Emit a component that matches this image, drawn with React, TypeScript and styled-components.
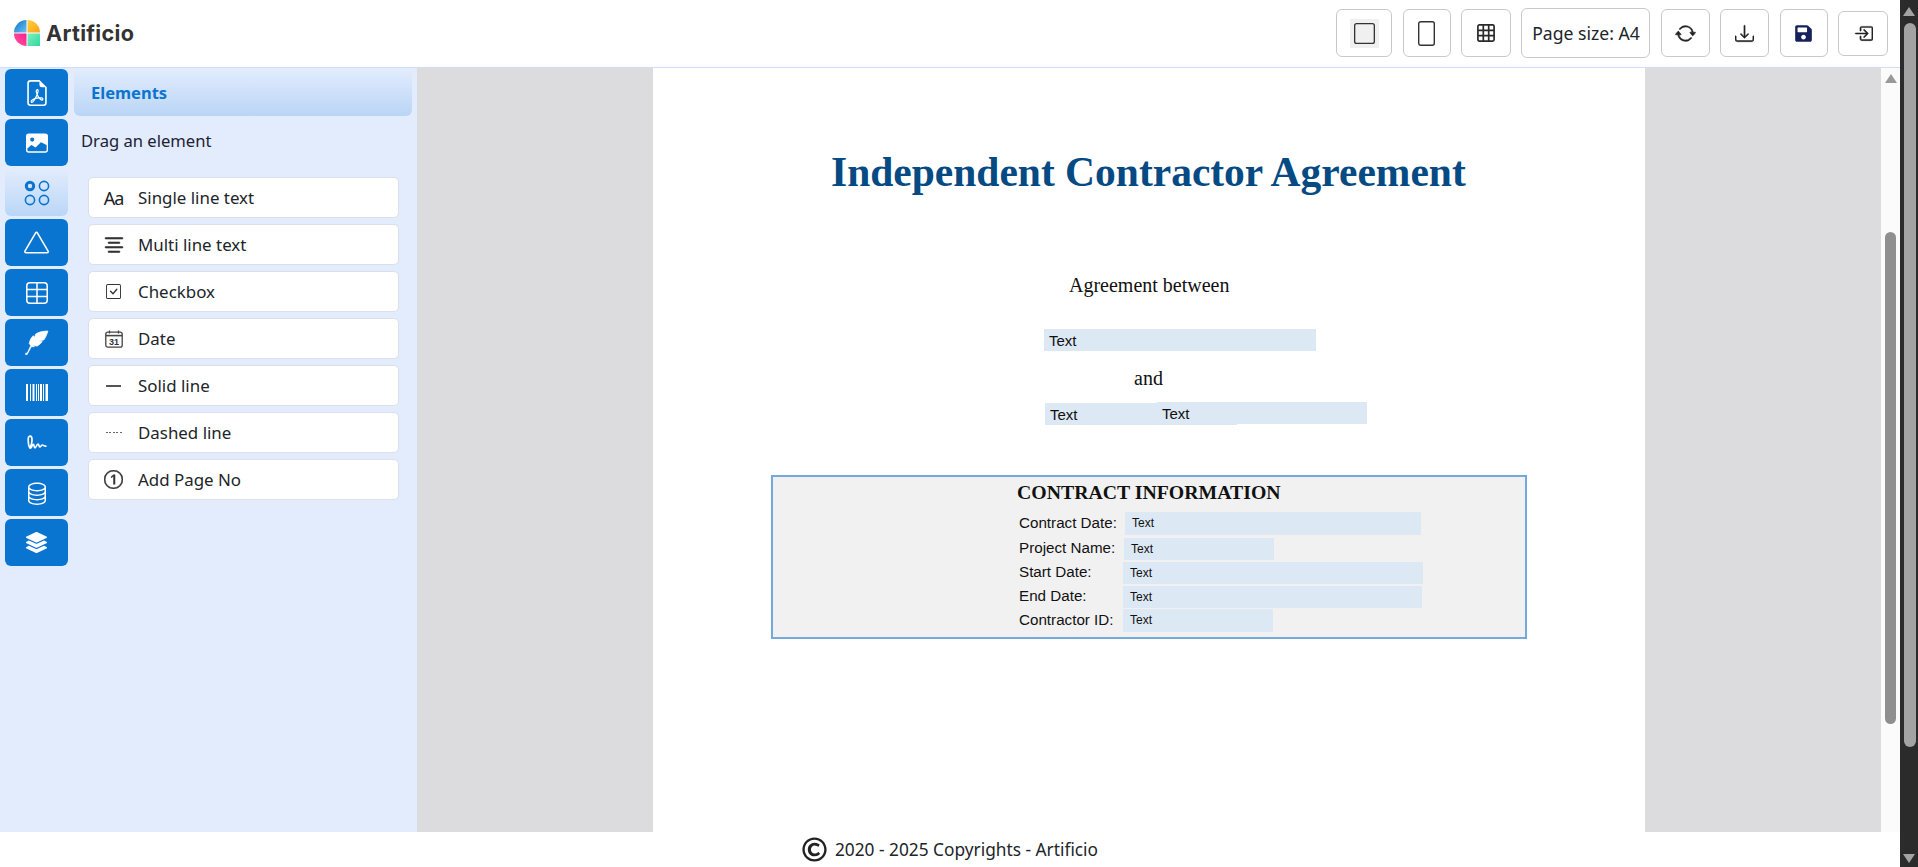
import React from "react";
import styled, { createGlobalStyle } from "styled-components";
import {
  BsArrowRepeat,
  BsBoxArrowInRight,
  BsCheckSquare,
  BsDatabase,
  BsDownload,
  BsFileEarmarkPdf,
  BsFillImageFill,
  BsSquare,
  BsTextCenter,
  BsTriangle,
  Bs1Circle,
} from "react-icons/bs";
import { FaLayerGroup, FaRegCopyright, FaSave } from "react-icons/fa";

const GlobalStyle = createGlobalStyle`
  html, body {
    margin: 0;
    padding: 0;
    height: 100%;
    overflow: hidden;
    background: #fff;
    font-family: "Noto Sans", "Open Sans", sans-serif;
  }
`;

const Shell = styled.div`
  display: flex;
  width: 100%;
  height: 867px;
`;

const Main = styled.div`
  flex: 1;
  min-width: 0;
  display: flex;
  flex-direction: column;
`;

const Header = styled.header`
  flex: none;
  display: flex;
  align-items: center;
  justify-content: space-between;
  padding: 0 12px 0 14px;
  box-sizing: border-box;
  border-bottom: 1px solid #cfdef8;
  height: 68px;
`;

const Brand = styled.div`
  display: flex;
  align-items: center;
  gap: 6px;
  font-family: Inter, sans-serif;
  font-weight: 700;
  font-size: 21.6px;
  letter-spacing: 0.3px;
  color: #333;
  margin-top: -1px;
`;

const Toolbar = styled.div`
  display: flex;
  align-items: center;
  gap: 10.4px;
  margin-top: -1px;
`;

const ToolButton = styled.button<{ $w: number; $h?: number }>`
  width: ${(p) => p.$w}px;
  height: ${(p) => p.$h ?? 48}px;
  box-sizing: border-box;
  padding: 0;
  background: #fff;
  border: 1px solid #c9c9c9;
  border-radius: 6px;
  display: flex;
  align-items: center;
  justify-content: center;
  font-family: "Noto Sans", sans-serif;
  font-size: 17.6px;
  color: #212529;
`;

const IconHighlight = styled.span`
  width: 29px;
  height: 29px;
  background: #f0f0f0;
  display: flex;
  align-items: center;
  justify-content: center;
`;

const Body = styled.div`
  flex: 1;
  min-height: 0;
  display: flex;
`;

const Sidebar = styled.aside`
  width: 417px;
  flex: none;
  display: flex;
  background: #e2ecfd;
`;

const Rail = styled.nav`
  width: 63px;
  margin-left: 5px;
  padding-top: 1px;
  display: flex;
  flex-direction: column;
  gap: 3px;
`;

const RailButton = styled.div<{ $active?: boolean }>`
  height: 47px;
  border-radius: 6px;
  display: flex;
  align-items: center;
  justify-content: center;
  color: ${(p) => (p.$active ? "#0a75d0" : "#fff")};
  background: ${(p) => (p.$active ? "linear-gradient(#e2ecfd, #bad6f6)" : "#0a75d0")};
`;

const Panel = styled.div`
  width: 338px;
  margin-left: 6px;
  padding-top: 1px;
`;

const PanelTitle = styled.div`
  height: 47px;
  border-radius: 0 0 6px 6px;
  background: linear-gradient(#e2ecfd, #b9d5f5);
  padding-left: 17px;
  display: flex;
  align-items: center;
  font-size: 16.5px;
  font-weight: 700;
  color: #0a75d0;
`;

const Hint = styled.div`
  margin: 13px 0 0 7px;
  height: 24px;
  line-height: 24px;
  font-size: 16.6px;
  color: #212135;
`;

const ElementList = styled.div`
  margin: 24px 13px 0 14px;
  display: flex;
  flex-direction: column;
  gap: 6px;
`;

const ElementCard = styled.div`
  height: 41px;
  box-sizing: border-box;
  background: #fff;
  border: 1px solid #dcdfe6;
  border-radius: 5px;
  display: flex;
  align-items: center;
  font-size: 16.9px;
  color: #212529;
`;

const ElementIcon = styled.span`
  width: 49px;
  flex: none;
  display: flex;
  align-items: center;
  justify-content: center;
  color: #333;
  font-size: 18px;
`;

const LetterIcon = styled.span`
  font-family: "Noto Sans", sans-serif;
  font-size: 18px;
  letter-spacing: -1px;
  color: #222;
`;

const SolidLine = styled.span`
  width: 15px;
  height: 2px;
  background: #555;
`;

const DottedLine = styled.span`
  width: 16px;
  height: 1.5px;
  background: repeating-linear-gradient(90deg, #666 0 2px, transparent 2px 3.5px);
`;

const Canvas = styled.div`
  flex: 1;
  min-width: 0;
  background: #dcdcde;
  display: flex;
  justify-content: center;
`;

const Page = styled.div`
  width: 992px;
  height: 100%;
  background: #fff;
  position: relative;
  overflow: hidden;
`;

const Title = styled.h1`
  position: absolute;
  left: 178px;
  top: 79px;
  margin: 0;
  white-space: nowrap;
  font-family: "Liberation Serif", serif;
  font-size: 41.5px;
  line-height: 50px;
  font-weight: 700;
  color: #064a83;
`;

const SerifLine = styled.div<{ $x: number; $y: number }>`
  position: absolute;
  left: ${(p) => p.$x}px;
  top: ${(p) => p.$y}px;
  font-family: "Liberation Serif", serif;
  font-size: 20px;
  line-height: 24px;
  white-space: nowrap;
  color: #111;
`;

const Field = styled.div<{ $x: number; $y: number; $w: number; $h?: number; $small?: boolean }>`
  position: absolute;
  left: ${(p) => p.$x}px;
  top: ${(p) => p.$y}px;
  width: ${(p) => p.$w}px;
  height: ${(p) => p.$h ?? 22}px;
  box-sizing: border-box;
  padding-left: ${(p) => (p.$small ? 7 : 5)}px;
  background: #dde8f5;
  font-family: "Liberation Sans", sans-serif;
  font-size: ${(p) => (p.$small ? 12 : 15)}px;
  line-height: ${(p) => (p.$small ? p.$h ?? 22 : 24)}px;
  color: #111;
`;

const InfoTable = styled.div`
  position: absolute;
  left: 118px;
  top: 407px;
  width: 756px;
  height: 164px;
  box-sizing: border-box;
  background: #f1f1f1;
  border: 2px solid #74a9dc;
`;

const InfoHeading = styled.div`
  position: absolute;
  left: 244px;
  top: 2px;
  font-family: "Liberation Serif", serif;
  font-weight: 700;
  font-size: 19.8px;
  line-height: 26px;
  white-space: nowrap;
  color: #111;
`;

const InfoLabel = styled.div<{ $y: number }>`
  position: absolute;
  left: 246px;
  top: ${(p) => p.$y}px;
  font-family: "Liberation Sans", sans-serif;
  font-size: 15.2px;
  line-height: 18px;
  white-space: nowrap;
  color: #111;
`;

const Footer = styled.footer`
  height: 35px;
  flex: none;
  display: flex;
  align-items: center;
  justify-content: center;
  gap: 8px;
  font-size: 17.3px;
  color: #212529;
`;

const ScrollTrack = styled.div<{ $w: number; $bg: string }>`
  width: ${(p) => p.$w}px;
  flex: none;
  background: ${(p) => p.$bg};
  position: relative;
`;

const ScrollThumb = styled.div<{ $top: number; $height: number; $left: number; $w: number; $bg: string }>`
  position: absolute;
  left: ${(p) => p.$left}px;
  top: ${(p) => p.$top}px;
  width: ${(p) => p.$w}px;
  height: ${(p) => p.$height}px;
  border-radius: 6px;
  background: ${(p) => p.$bg};
`;

const ScrollArrow = styled.div<{ $left: number; $top: number; $down?: boolean; $bg: string }>`
  position: absolute;
  left: ${(p) => p.$left}px;
  top: ${(p) => p.$top}px;
  width: 0;
  height: 0;
  border-left: 6px solid transparent;
  border-right: 6px solid transparent;
  border-bottom: ${(p) => (p.$down ? "none" : `9px solid ${p.$bg}`)};
  border-top: ${(p) => (p.$down ? `9px solid ${p.$bg}` : "none")};
`;

const Logo = () => (
  <svg width="26" height="26" viewBox="0 0 27 27">
    <defs>
      <linearGradient id="lgA" x1="0" y1="0" x2="1" y2="1">
        <stop offset="0" stopColor="#0a6fc4" />
        <stop offset="1" stopColor="#6cc3f5" />
      </linearGradient>
      <linearGradient id="lgB" x1="0" y1="0" x2="1" y2="1">
        <stop offset="0" stopColor="#ffd23c" />
        <stop offset="1" stopColor="#ff9f1c" />
      </linearGradient>
      <linearGradient id="lgC" x1="1" y1="0" x2="0" y2="1">
        <stop offset="0" stopColor="#ff1d8e" />
        <stop offset="1" stopColor="#ff5a9e" />
      </linearGradient>
      <linearGradient id="lgD" x1="0" y1="0" x2="1" y2="1">
        <stop offset="0" stopColor="#7ef0c0" />
        <stop offset="1" stopColor="#2fd9a0" />
      </linearGradient>
    </defs>
    <path d="M13 0v13H0A13 13 0 0 1 13 0z" fill="url(#lgA)" />
    <path d="M14 0a13 13 0 0 1 13 13H14z" fill="url(#lgB)" />
    <path d="M0 14h13v13A13 13 0 0 1 0 14z" fill="url(#lgC)" />
    <path d="M14 14h13v13H14z" fill="url(#lgD)" />
  </svg>
);

const PortraitIcon = () => (
  <svg width="17" height="25" viewBox="0 0 17 25" fill="none" stroke="#333" strokeWidth="1.4">
    <rect x="0.7" y="0.7" width="15.6" height="23.6" rx="2" />
  </svg>
);

const GridIcon = () => (
  <svg width="18" height="18" viewBox="0 0 18 18" fill="none" stroke="#2a2a2a" strokeWidth="1.7">
    <rect x="0.9" y="0.9" width="16.2" height="16.2" rx="1.5" />
    <path d="M6.3 0.9v16.2M11.7 0.9v16.2M0.9 6.3h16.2M0.9 11.7h16.2" />
  </svg>
);

const ElementsIcon = () => (
  <svg width="26" height="26" viewBox="0 0 26 26" fill="none" stroke="currentColor" strokeWidth="1.6">
    <circle cx="6" cy="6" r="3.7" strokeWidth="3" />
    <circle cx="20" cy="6" r="4.6" />
    <circle cx="6" cy="20" r="4.6" />
    <circle cx="20" cy="20" r="4.6" />
  </svg>
);

const TableIcon = () => (
  <svg width="22" height="22" viewBox="0 0 22 22" fill="none" stroke="currentColor" strokeWidth="1.5">
    <rect x="0.8" y="0.8" width="20.4" height="20.4" rx="3" />
    <path d="M0.8 7.5h20.4M0.8 14.5h20.4M11 0.8v20.4" />
  </svg>
);

const QuillIcon = () => (
  <svg width="25" height="25" viewBox="0 0 24 24">
    <path
      fill="currentColor"
      stroke="currentColor"
      strokeWidth="0.7"
      d="M23 1C18 1 14 2 11 4L10.5 7 9 5.5C7 7 5.5 10 5 13L6.5 15 3 22.5 1.8 22 1.5 23.5 3 23.5 7 16 10 16 9 14.5 12.5 15.5C15 14 16.5 12.5 17.5 11L14 10.5 19 9.5C21 7 22 4 23 1Z"
    />
  </svg>
);

const BarcodeIcon = () => (
  <svg width="22" height="17" viewBox="0 0 22 17" fill="currentColor">
    <rect x="0" width="2" height="17" />
    <rect x="4" width="1" height="17" />
    <rect x="6.5" width="2" height="17" />
    <rect x="10" width="1" height="17" />
    <rect x="12" width="1" height="17" />
    <rect x="14" width="2" height="17" />
    <rect x="17" width="1" height="17" />
    <rect x="19.5" width="2.5" height="17" />
  </svg>
);

const SignatureIcon = () => (
  <svg width="22" height="15" viewBox="0 0 22 15" fill="none" stroke="currentColor" strokeWidth="1.7" strokeLinecap="round" strokeLinejoin="round">
    <path d="M4 13C6 9 6.5 4 5.5 2 4.5.4 2.2 1 2.2 4c0 3 .5 7.5 1.8 9 1.3 1 2-3.4 3.2-3.6 1.2-.1.6 3.4 1.8 3.4 1.2 0 1.6-3.8 3-3.8 1.1 0 .7 3 1.8 3 1 0 1.5-2 2.6-2 .9 0 1.3 1.2 3.4 1.2" />
  </svg>
);

const CalendarIcon = () => (
  <svg width="18" height="18" viewBox="0 0 18 18">
    <rect x="0.8" y="2.2" width="16.4" height="15" rx="2" fill="none" stroke="#444" strokeWidth="1.3" />
    <path d="M0.8 5.6h16.4" stroke="#444" strokeWidth="1.6" />
    <path d="M4.5 0.6v3M13.5 0.6v3" stroke="#444" strokeWidth="1.3" />
    <text x="9" y="15" textAnchor="middle" fontFamily="Liberation Sans, sans-serif" fontSize="9" fontWeight="700" fill="#333">
      31
    </text>
  </svg>
);

const thick = { stroke: "currentColor", strokeWidth: 0.4 };

const elements: { label: string; icon: React.ReactNode }[] = [
  { label: "Single line text", icon: <LetterIcon>Aa</LetterIcon> },
  { label: "Multi line text", icon: <BsTextCenter size={24} {...thick} /> },
  { label: "Checkbox", icon: <BsCheckSquare size={15} /> },
  { label: "Date", icon: <CalendarIcon /> },
  { label: "Solid line", icon: <SolidLine /> },
  { label: "Dashed line", icon: <DottedLine /> },
  { label: "Add Page No", icon: <Bs1Circle size={19} {...thick} /> },
];

const infoRows = [
  { label: "Contract Date:", labelY: 37, x: 352, y: 35, w: 296, h: 23 },
  { label: "Project Name:", labelY: 62, x: 351, y: 61, w: 150, h: 22 },
  { label: "Start Date:", labelY: 86, x: 350, y: 85, w: 300, h: 22 },
  { label: "End Date:", labelY: 110, x: 350, y: 109, w: 299, h: 22 },
  { label: "Contractor ID:", labelY: 134, x: 350, y: 132, w: 150, h: 23 },
];

export default function App() {
  return (
    <>
      <GlobalStyle />
      <Shell>
        <Main>
          <Header>
            <Brand>
              <Logo />
              Artificio
            </Brand>
            <Toolbar>
              <ToolButton $w={56}>
                <IconHighlight>
                  <BsSquare size={21} color="#333" />
                </IconHighlight>
              </ToolButton>
              <ToolButton $w={48}>
                <PortraitIcon />
              </ToolButton>
              <ToolButton $w={50}>
                <GridIcon />
              </ToolButton>
              <ToolButton $w={129} $h={50}>
                Page size: A4
              </ToolButton>
              <ToolButton $w={49}>
                <BsArrowRepeat size={21} color="#222" {...thick} />
              </ToolButton>
              <ToolButton $w={49}>
                <BsDownload size={19} color="#222" {...thick} />
              </ToolButton>
              <ToolButton $w={48}>
                <FaSave size={19} color="#16215c" />
              </ToolButton>
              <ToolButton $w={50} $h={45}>
                <BsBoxArrowInRight size={19} color="#222" {...thick} />
              </ToolButton>
            </Toolbar>
          </Header>
          <Body>
            <Sidebar>
              <Rail>
                <RailButton><BsFileEarmarkPdf size={26} /></RailButton>
                <RailButton><BsFillImageFill size={22} /></RailButton>
                <RailButton $active><ElementsIcon /></RailButton>
                <RailButton><BsTriangle size={25} /></RailButton>
                <RailButton><TableIcon /></RailButton>
                <RailButton><QuillIcon /></RailButton>
                <RailButton><BarcodeIcon /></RailButton>
                <RailButton><SignatureIcon /></RailButton>
                <RailButton><BsDatabase size={24} /></RailButton>
                <RailButton><FaLayerGroup size={21} /></RailButton>
              </Rail>
              <Panel>
                <PanelTitle>Elements</PanelTitle>
                <Hint>Drag an element</Hint>
                <ElementList>
                  {elements.map((el) => (
                    <ElementCard key={el.label}>
                      <ElementIcon>{el.icon}</ElementIcon>
                      {el.label}
                    </ElementCard>
                  ))}
                </ElementList>
              </Panel>
            </Sidebar>
            <Canvas>
              <Page>
                <Title>Independent Contractor Agreement</Title>
                <SerifLine $x={416} $y={205}>Agreement between</SerifLine>
                <Field $x={391} $y={261} $w={272}>Text</Field>
                <SerifLine $x={481} $y={298}>and</SerifLine>
                <Field $x={392} $y={335} $w={192}>Text</Field>
                <Field $x={504} $y={334} $w={210}>Text</Field>
                <InfoTable>
                  <InfoHeading>CONTRACT INFORMATION</InfoHeading>
                  {infoRows.map((row) => (
                    <React.Fragment key={row.label}>
                      <InfoLabel $y={row.labelY}>{row.label}</InfoLabel>
                      <Field $x={row.x} $y={row.y} $w={row.w} $h={row.h} $small>Text</Field>
                    </React.Fragment>
                  ))}
                </InfoTable>
              </Page>
            </Canvas>
            <ScrollTrack $w={19} $bg="#fbfbfb">
              <ScrollArrow $left={4} $top={6} $bg="#999" />
              <ScrollThumb $left={4} $w={11} $top={164} $height={492} $bg="#8f8f8f" />
            </ScrollTrack>
          </Body>
          <Footer>
            <FaRegCopyright size={25} color="#222" />
            2020 - 2025 Copyrights - Artificio
          </Footer>
        </Main>
        <ScrollTrack $w={18} $bg="#2b2b2b">
          <ScrollArrow $left={3} $top={7} $bg="#a3a3a3" />
          <ScrollThumb $left={4} $w={12} $top={23} $height={724} $bg="#a3a3a3" />
          <ScrollArrow $left={3} $top={854} $down $bg="#a3a3a3" />
        </ScrollTrack>
      </Shell>
    </>
  );
}
